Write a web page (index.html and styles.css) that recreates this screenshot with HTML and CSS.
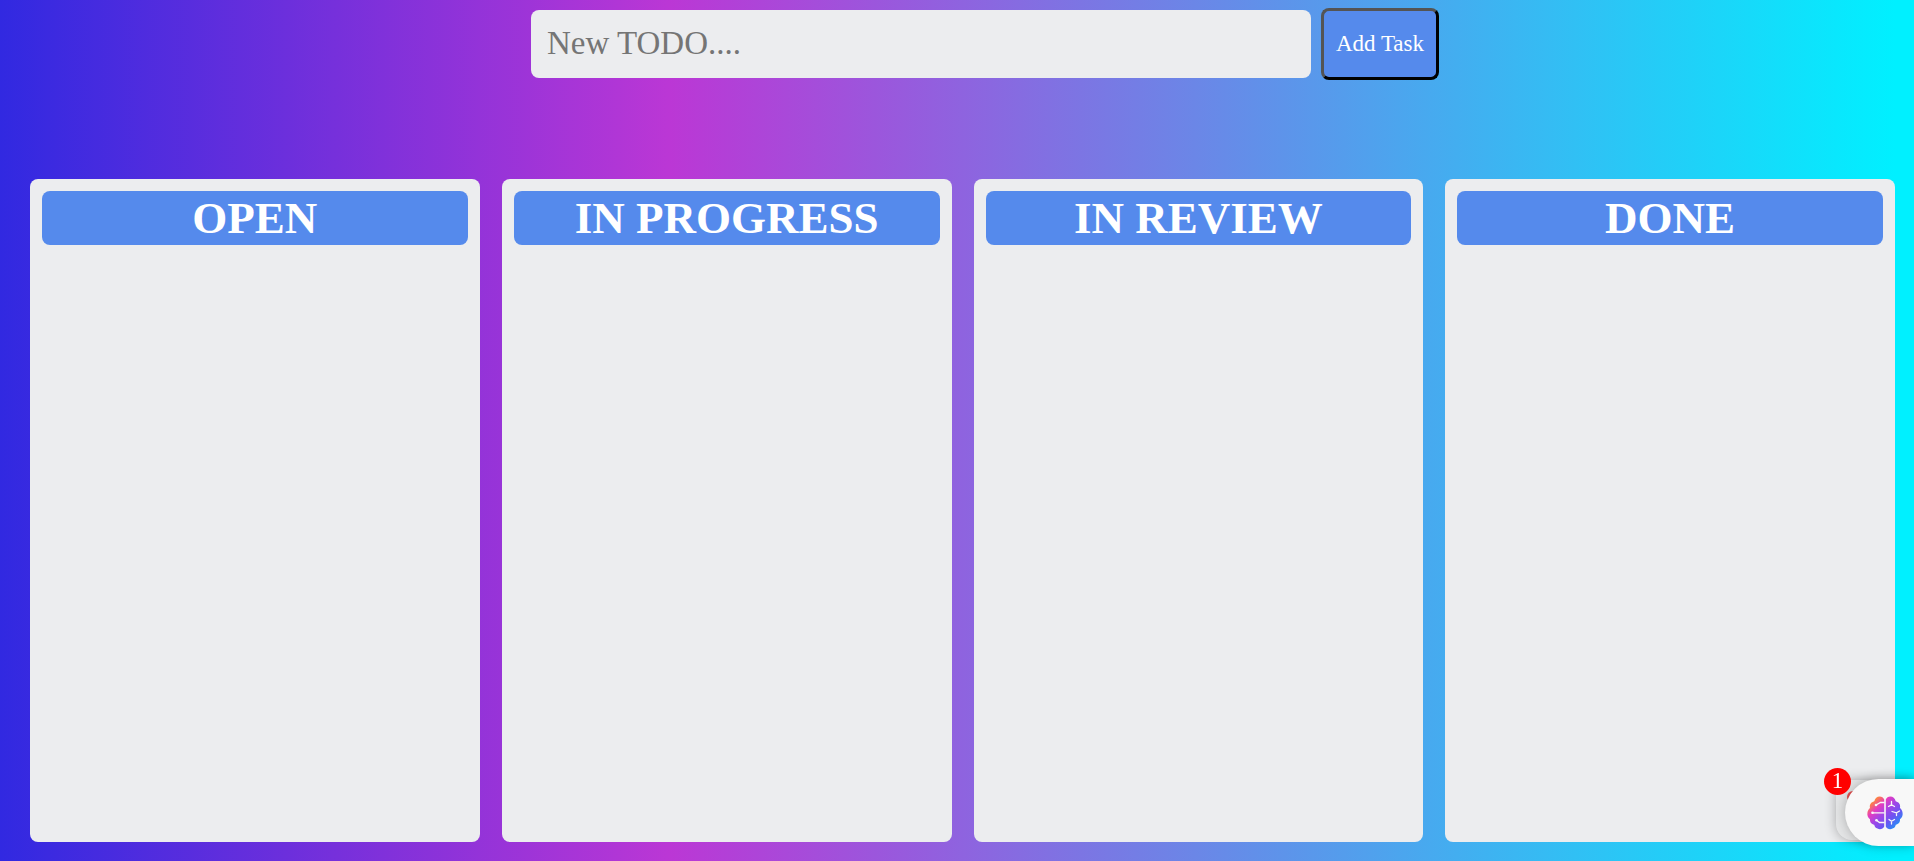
FILE: index.html
```html
<!DOCTYPE html>
<html lang="en">
<head>
  <meta charset="utf-8">
  <meta name="viewport" content="width=device-width, initial-scale=1">
  <title>Task Board</title>
  <link rel="stylesheet" href="styles.css">
</head>
<body>
  <form class="task-form">
    <input class="task-input" type="text" placeholder="New TODO...." aria-label="New TODO">
    <button class="task-button" type="button">Add Task</button>
  </form>
  <main class="board">
    <section class="column"><h1 class="column-title">OPEN</h1></section>
    <section class="column"><h1 class="column-title">IN PROGRESS</h1></section>
    <section class="column"><h1 class="column-title">IN REVIEW</h1></section>
    <section class="column"><h1 class="column-title">DONE</h1></section>
  </main>
  <aside class="assistant">
    <div class="assistant-card"><span class="assistant-dot"></span></div>
    <button class="assistant-tab" type="button" aria-label="Assistant">
      <svg class="brain" viewBox="0 0 36 34" aria-hidden="true">
        <defs>
          <linearGradient id="brain-fill" x1="0.12" y1="0.08" x2="0.9" y2="0.85">
            <stop offset="0" stop-color="#ff9a2e"/>
            <stop offset="0.1" stop-color="#fb7a50"/>
            <stop offset="0.28" stop-color="#e53cc0"/>
            <stop offset="0.5" stop-color="#a345e6"/>
            <stop offset="0.75" stop-color="#6a55f2"/>
            <stop offset="1" stop-color="#2590f5"/>
          </linearGradient>
        </defs>
        <path fill="url(#brain-fill)" d="M17.2 3.5V30.5C16 33 13 33.8 10.5 32.6C8.600 32 7.600 30.500 7.200 28.700C4.600 28.300 2.700 26.200 3 23.300C1 21.700 0 19.500 0.400 17C.6 15 1.500 13.200 3 12C2.300 8.500 4 6 7.300 5.200C8 2.300 10 .6 12.700 .6C14.800 .6 16.400 1.600 17.200 3.500ZM18.800 3.500C19.600 1.600 21.200 .6 23.300 .6C26 .6 28 2.300 28.700 5.200C32 6 33.700 8.500 33 12C34.500 13.200 35.400 15 35.600 17C36 19.500 35 21.700 33 23.300C33.300 26.200 31.400 28.300 28.800 28.700C28.400 30.500 27.400 32 25.500 32.600C23 33.800 20 33 18.800 30.500Z"/>
        <g fill="none" stroke="#f8f8f8" stroke-width="1.300" stroke-linecap="round">
          <path d="M17 6.500H13.500L9 9M17 16.800H5.500M17 26.500H12.500L9.500 24.300"/>
          <path d="M24.500 5.500V8.800L21.500 10.500M24.500 8.800L27.500 10.500M25 15.500L29.500 16.800L32.500 15M29.500 16.800V19.500M22 23.500L24.500 25.300L27.500 23.500M24.500 25.300V28"/>
        </g>
        <g fill="#f8f8f8"><circle cx="9" cy="9" r="1.300"/><circle cx="5.500" cy="16.800" r="1.300"/><circle cx="9.500" cy="24.300" r="1.300"/></g>
      </svg>
    </button>
    <span class="assistant-badge">1</span>
  </aside>
</body>
</html>
```
FILE: styles.css
```css
* { box-sizing: border-box; }

body {
  display: flex;
  flex-direction: column;
  min-height: 100vh;
  margin: 0;
  background: linear-gradient(90deg, #3129e1 0%, #bb37d5 35%, #00f0ff 99%);
  font-family: "Liberation Serif", "Times New Roman", serif;
}

.task-form {
  display: flex;
  justify-content: center;
  align-items: center;
  gap: 10px;
  padding: 8px 0 0 56px;
}

.task-input {
  flex: 0 1 780px;
  min-width: 0;
  height: 68px;
  padding: 0 16px 2px;
  border: 0;
  border-radius: 8px;
  background: #ecedef;
  font: 33px "Liberation Serif", "Times New Roman", serif;
}

.task-input::placeholder { color: #757575; }

.task-button {
  height: 72px;
  padding: 0 12px;
  border: 3px outset #000;
  border-radius: 8px;
  background: #558aec;
  color: #fff;
  font: 23px "Liberation Serif", "Times New Roman", serif;
}

.board {
  display: grid;
  flex: 1;
  grid-template-columns: repeat(4, 1fr);
  gap: 22px;
  padding: 99px 19px 19px 30px;
}

.column {
  padding: 12px;
  border-radius: 8px;
  background: #ecedef;
}

.column-title {
  margin: 0;
  border-radius: 8px;
  background: #558aec;
  color: #fff;
  font-size: 45px;
  line-height: 54px;
  text-align: center;
}

.assistant {
  position: fixed;
  right: 0;
  bottom: 15px;
  width: 78px;
  height: 67px;
}

.assistant-card {
  position: absolute;
  inset: 1px 0 6px 0;
  border-radius: 16px 0 0 16px;
  background: #e4e5e6;
  box-shadow: 0 0 12px rgba(0, 0, 0, 0.3);
}

.assistant-dot {
  position: absolute;
  top: 11px;
  left: 11px;
  width: 12px;
  height: 12px;
  border-radius: 50%;
  background: #e84c4c;
}

.assistant-tab {
  position: absolute;
  inset: 0 0 0 9px;
  display: flex;
  align-items: center;
  padding: 0 0 0 22px;
  border: 0;
  border-radius: 34px 0 0 34px;
  background: #f8f8f8;
  box-shadow: 0 0 12px rgba(0, 0, 0, 0.25);
}

.brain {
  width: 36px;
  height: 34px;
}

.assistant-badge {
  position: absolute;
  top: -11px;
  left: -12px;
  width: 27px;
  height: 27px;
  border-radius: 50%;
  background: #f00;
  color: #fff;
  font-size: 23px;
  line-height: 26px;
  text-align: center;
}
```
